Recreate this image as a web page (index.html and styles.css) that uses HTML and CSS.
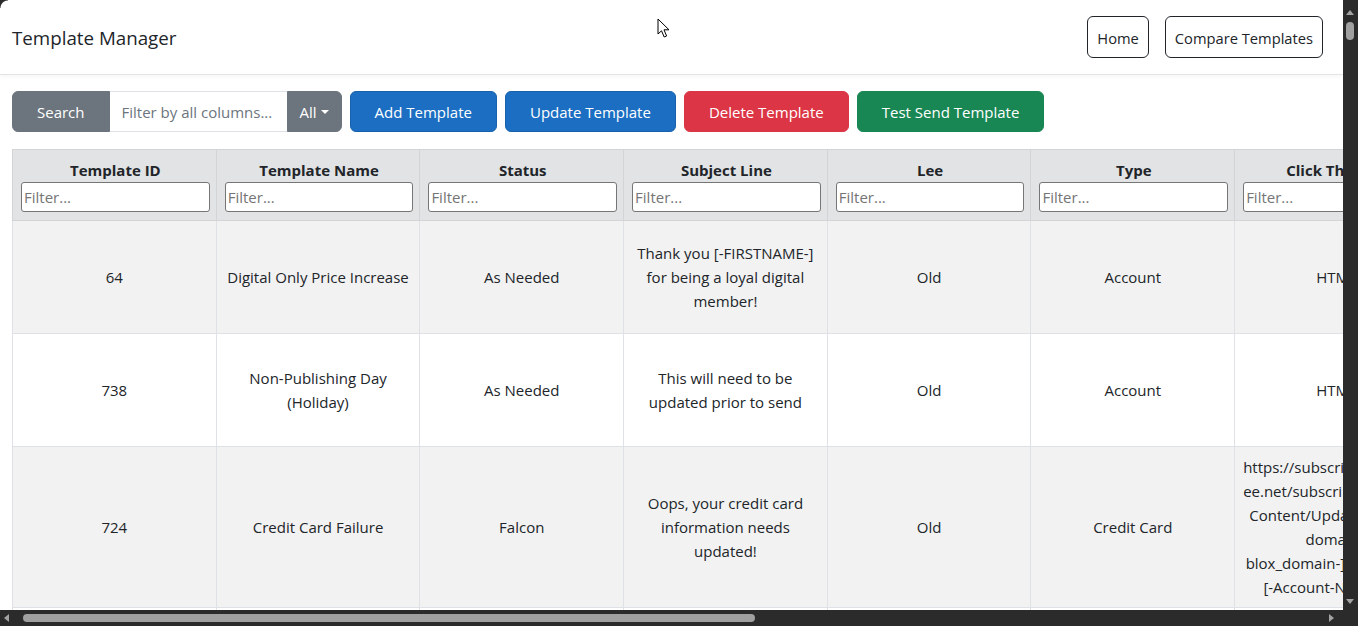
FILE: index.html
```html
<!DOCTYPE html>
<html lang="en">
<head>
<meta charset="utf-8">
<title>Template Manager</title>
<link rel="stylesheet" href="styles.css">
</head>
<body>
<div class="page">
  <nav class="navbar">
    <span class="brand">Template Manager</span>
    <div class="nav-actions">
      <button class="btn-outline">Home</button>
      <button class="btn-outline">Compare Templates</button>
    </div>
  </nav>
  <main class="content">
    <div class="toolbar">
      <div class="search-group">
        <button class="btn btn-secondary group-start">Search</button>
        <input class="search-input" type="text" placeholder="Filter by all columns...">
        <button class="btn btn-secondary group-end dropdown">All<span class="caret"></span></button>
      </div>
      <button class="btn btn-primary">Add Template</button>
      <button class="btn btn-primary">Update Template</button>
      <button class="btn btn-danger">Delete Template</button>
      <button class="btn btn-success">Test Send Template</button>
    </div>
    <table class="grid">
      <colgroup>
        <col class="col"><col class="col"><col class="col"><col class="col"><col class="col"><col class="col"><col class="col"><col class="col">
      </colgroup>
      <thead>
        <tr>
          <th><div class="th-title">Template ID</div><input class="filter" type="text" placeholder="Filter..."></th>
          <th><div class="th-title">Template Name</div><input class="filter" type="text" placeholder="Filter..."></th>
          <th><div class="th-title">Status</div><input class="filter" type="text" placeholder="Filter..."></th>
          <th><div class="th-title">Subject Line</div><input class="filter" type="text" placeholder="Filter..."></th>
          <th><div class="th-title">Lee</div><input class="filter" type="text" placeholder="Filter..."></th>
          <th><div class="th-title">Type</div><input class="filter" type="text" placeholder="Filter..."></th>
          <th><div class="th-title">Click Through</div><input class="filter" type="text" placeholder="Filter..."></th>
          <th><div class="th-title">Body</div><input class="filter" type="text" placeholder="Filter..."></th>
        </tr>
      </thead>
      <tbody>
        <tr class="row-striped row-fixed">
          <td>64</td>
          <td>Digital Only Price Increase</td>
          <td>As Needed</td>
          <td>Thank you [-FIRSTNAME-] for being a loyal digital member!</td>
          <td>Old</td>
          <td>Account</td>
          <td>HTML</td>
          <td>Price Increase</td>
        </tr>
        <tr class="row-fixed">
          <td>738</td>
          <td>Non-Publishing Day (Holiday)</td>
          <td>As Needed</td>
          <td>This will need to be updated prior to send</td>
          <td>Old</td>
          <td>Account</td>
          <td>HTML</td>
          <td>Holiday</td>
        </tr>
        <tr class="row-striped">
          <td>724</td>
          <td>Credit Card Failure</td>
          <td>Falcon</td>
          <td>Oops, your credit card information needs updated!</td>
          <td>Old</td>
          <td>Credit Card</td>
          <td class="url-cell">https://subscriber.townnews-l<br>ee.net/subscriber/Manage-<br>Content/Update-Account<br>domain=<br>blox_domain-]&amp;accounts=<br>[-Account-Numbers-]</td>
          <td>Card Failure</td>
        </tr>
        <tr>
          <td>512</td>
          <td>Welcome</td>
          <td>Active</td>
          <td>Welcome!</td>
          <td>Old</td>
          <td>Account</td>
          <td>HTML</td>
          <td>Welcome</td>
        </tr>
      </tbody>
    </table>
  </main>
</div>

<div class="window-corner"></div>
<svg class="cursor" width="14" height="22" viewBox="0 0 14 22"><path d="M1 1 L1 16 L4.5 12.8 L7.2 19 L9.6 18 L7 11.8 L12 11.8 Z" fill="#fff" stroke="#000" stroke-width="1" stroke-linejoin="round"/></svg>

<div class="vscroll">
  <span class="arrow-up"></span>
  <span class="vthumb"></span>
  <span class="arrow-down"></span>
</div>
<div class="hscroll">
  <span class="arrow-left"></span>
  <span class="hthumb"></span>
  <span class="arrow-right"></span>
</div>
</body>
</html>
```
FILE: styles.css
```css
* { box-sizing: border-box; }
html, body {
  margin: 0;
  height: 100%;
  overflow: hidden;
}
body {
  font-family: "Open Sans", "Noto Sans", sans-serif;
  font-size: 15px;
  line-height: 24px;
  color: #212529;
  background: #fff;
}
.page {
  width: 1343px;
}
.navbar {
  height: 75px;
  display: flex;
  align-items: center;
  justify-content: space-between;
  padding: 0 20px 0 12px;
  background: #fff;
  border-bottom: 1px solid #e4e4e4;
  box-shadow: 0 2px 4px rgba(0, 0, 0, 0.04);
}
.brand {
  font-size: 18.75px;
  line-height: 30px;
  margin-top: 2px;
}
.nav-actions {
  display: flex;
  gap: 16px;
}
.btn-outline {
  font: inherit;
  font-size: 14.7px;
  line-height: 24px;
  height: 42px;
  padding: 2px 9px 0;
  background: #fff;
  color: #212529;
  border: 1px solid #212529;
  border-radius: 6px;
}
.content {
  padding: 16px 0 0 12px;
}
.toolbar {
  display: flex;
  gap: 8px;
  margin-bottom: 17px;
}
.search-group {
  display: flex;
}
.btn {
  font: inherit;
  font-size: 15px;
  line-height: 24px;
  height: 41px;
  padding: 0 24px;
  border: 1px solid transparent;
  border-radius: 6px;
  color: #fff;
}
.btn-secondary { background: #6c757d; border-color: #6c757d; }
.btn-primary { background: #1b6ec2; border-color: #1861ac; }
.btn-danger { background: #dc3545; border-color: #dc3545; }
.btn-success { background: #198754; border-color: #198754; }
.group-start {
  border-top-right-radius: 0;
  border-bottom-right-radius: 0;
}
.group-end {
  border-top-left-radius: 0;
  border-bottom-left-radius: 0;
}
.dropdown {
  padding: 0 12px;
  display: flex;
  align-items: center;
}
.caret {
  display: inline-block;
  margin-left: 4px;
  border-top: 4.5px solid #fff;
  border-left: 4.5px solid transparent;
  border-right: 4.5px solid transparent;
}
.search-input {
  width: 177px;
  height: 41px;
  font: inherit;
  font-size: 15px;
  padding: 0 12px;
  border: 1px solid #dee2e6;
  border-left: 0;
  border-right: 0;
  color: #212529;
  outline: none;
}
.search-input::placeholder { color: #6c757d; }
.grid {
  border-collapse: collapse;
  table-layout: fixed;
  width: 1630px;
}
.col { width: 203.7px; }
.grid th {
  background: #e2e3e5;
  border: 1px solid #d3d4d6;
  padding: 8px 6px 8px 8px;
  font-weight: 700;
  text-align: center;
  vertical-align: top;
}
.th-title {
  line-height: 24px;
}
.filter {
  display: block;
  width: 100%;
  height: 30px;
  font: inherit;
  font-weight: 400;
  font-size: 15px;
  padding: 1px 2px;
  border: 1px solid #767676;
  border-radius: 3px;
  background: #fff;
  color: #212529;
}
.filter::placeholder { color: #757575; }
.grid td {
  border: 1px solid #dee2e6;
  padding: 8px;
  text-align: center;
  vertical-align: middle;
  background: #fff;
}
.row-striped td { background: #f2f2f2; }
.row-fixed td { height: 113px; }
.url-cell { white-space: nowrap; }

.window-corner {
  position: fixed;
  left: 0;
  top: 0;
  width: 8px;
  height: 8px;
  background: radial-gradient(circle at 100% 100%, transparent 7px, #2b2b2b 8px);
}
.cursor {
  position: fixed;
  left: 657px;
  top: 18px;
}
.vscroll {
  position: fixed;
  right: 0;
  top: 0;
  width: 15px;
  height: 610px;
  background: #2b2b2b;
}
.arrow-up, .arrow-down, .arrow-left, .arrow-right {
  position: absolute;
  width: 0;
  height: 0;
}
.arrow-up {
  left: 3px;
  top: 10px;
  border-left: 4.5px solid transparent;
  border-right: 4.5px solid transparent;
  border-bottom: 5px solid #a3a3a3;
}
.arrow-down {
  left: 3px;
  bottom: 6px;
  border-left: 4.5px solid transparent;
  border-right: 4.5px solid transparent;
  border-top: 5px solid #a3a3a3;
}
.vthumb {
  position: absolute;
  left: 3px;
  top: 22px;
  width: 8px;
  height: 18px;
  border-radius: 4px;
  background: #a0a0a0;
}
.hscroll {
  position: fixed;
  left: 0;
  bottom: 0;
  width: 100%;
  height: 16px;
  background: #2b2b2b;
}
.arrow-left {
  left: 4px;
  top: 4px;
  border-top: 4.5px solid transparent;
  border-bottom: 4.5px solid transparent;
  border-right: 5px solid #a3a3a3;
}
.arrow-right {
  left: 1329px;
  top: 4px;
  border-top: 4.5px solid transparent;
  border-bottom: 4.5px solid transparent;
  border-left: 5px solid #a3a3a3;
}
.hthumb {
  position: absolute;
  left: 23px;
  top: 4px;
  width: 732px;
  height: 8px;
  border-radius: 4px;
  background: #a0a0a0;
}
```
